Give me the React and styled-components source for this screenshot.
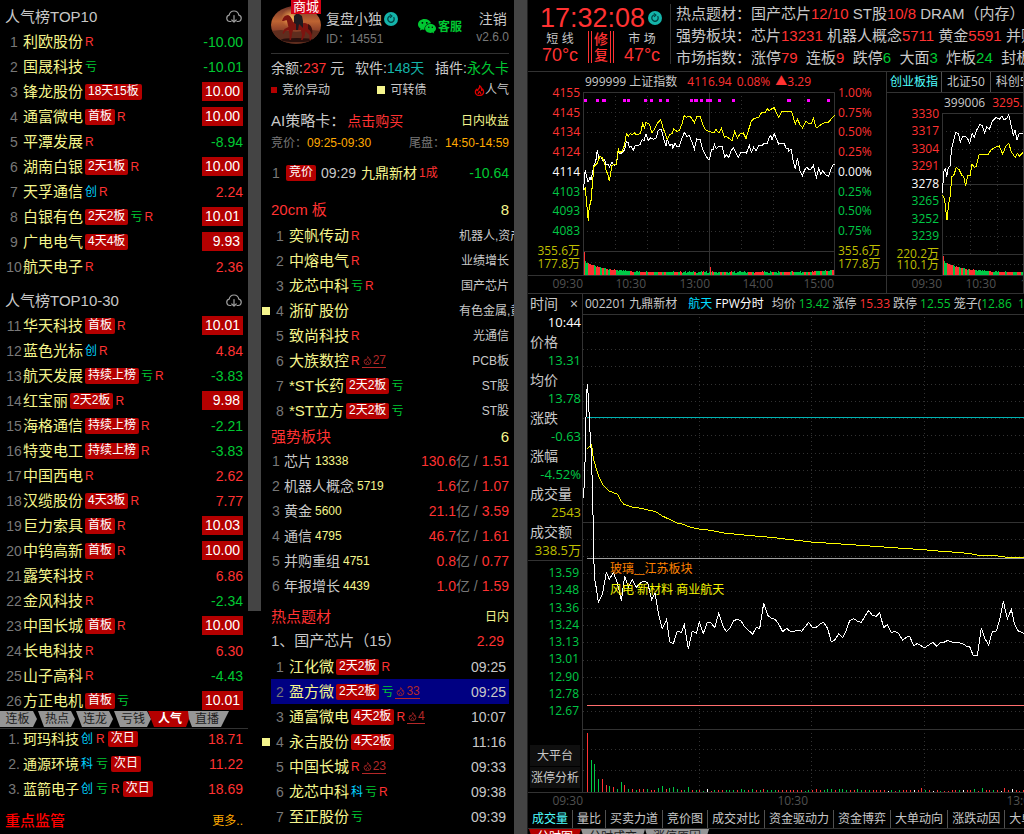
import React from "react";
import styled, { createGlobalStyle } from "styled-components";

const c = {
  red: "#ff3232",
  green: "#00c832",
  name: "#f5f58c",
  text: "#c8c8c8",
  dim: "#787878",
  badge: "#b40000",
  cyan: "#00d2ff",
  orange: "#ffaa00",
  line: "#323232",
  gutter: "#444444",
};
const web = '"Liberation Sans", "Noto Sans CJK SC", sans-serif';
const term = '"Open Sans", "Noto Sans CJK SC", sans-serif';

const Global = createGlobalStyle`
  * { box-sizing: border-box; }
  body { margin: 0; background: #000; overflow: hidden; }
  ul { list-style: none; margin: 0; padding: 0; }
  button { border: 0; background: none; padding: 0; margin: 0; font: inherit; color: inherit; cursor: pointer; }
  h2 { margin: 0; font-weight: 400; }
  svg { display: block; }
`;

const Page = styled.main`
  display: grid;
  grid-template-columns: 248px 13px 253px 14px minmax(0, 1fr);
  grid-template-rows: minmax(0, 1fr);
  height: 100vh;
  background: #000;
  color: ${c.text};
  font: 14px/20px ${web};
  white-space: nowrap;
`;
const Gutter = styled.div`
  background: ${c.gutter};
  height: ${(p) => p.$h || "100%"};
  border-right: ${(p) => (p.$edge ? "1px solid #202020" : "0")};
`;
const Left = styled.section`
  display: flex;
  flex-direction: column;
  min-height: 0;
  overflow: hidden;
`;
const Ranks = styled.div`
  flex: 1;
  min-height: 0;
  overflow: hidden;
  padding-top: 4px;
`;
const RankTitle = styled.h2`
  display: flex;
  justify-content: space-between;
  align-items: center;
  height: 25px;
  padding: 0 6px 0 5px;
  margin-top: ${(p) => p.$gap || 0}px;
  font-size: 15px;
`;
const Row = styled.li`
  position: relative;
  display: flex;
  align-items: center;
  height: ${(p) => p.$h || 25}px;
  padding: 0 5px;
`;
const Num = styled.span`
  width: 18px;
  text-align: center;
  color: ${c.dim};
`;
const Name = styled.span`
  color: ${c.name};
  font-size: ${(p) => p.$size || 15}px;
`;
const Tags = styled.span`
  display: flex;
  align-items: center;
  gap: ${(p) => p.$gap || 2}px;
  margin-left: 2px;
  margin-right: auto;
  font-size: 12px;
  line-height: 16px;
`;
const Badge = styled.span`
  padding: 0 3px;
  height: 16px;
  border-radius: 2px;
  background: ${c.badge};
  color: #fff;
  font-size: 12px;
  line-height: 15px;
`;
const Mark = styled.span`
  color: ${(p) => p.$c};
`;
const Heat = styled.a`
  display: inline-flex;
  align-items: center;
  gap: 1px;
  color: #b42828;
  border-bottom: 1px solid #b42828;
  height: 14px;
  padding-left: 1px;
  text-decoration: none;
`;
const Value = styled.span`
  color: ${(p) => p.$c};
`;
const Limit = styled.span`
  width: 41px;
  padding-right: 3px;
  text-align: right;
  line-height: 19px;
  background: ${c.badge};
  color: #fff;
`;
const SkewTabs = styled.nav`
  display: flex;
  height: 17px;
  flex: none;
`;
const SkewTab = styled.button`
  width: 41px;
  height: 16px;
  margin-right: -3px;
  font-size: 12px;
  line-height: 15px;
  padding-right: 3px;
  background: #969696;
  color: #1e1e1e;
  clip-path: polygon(0 0, 33px 0, 37px 50%, 33px 100%, 6px 100%);
  ${(p) => p.$first && "clip-path: polygon(0 0, 33px 0, 37px 50%, 33px 100%, 0 100%); padding-right: 6px;"}
  ${(p) => p.$last && "clip-path: polygon(0 0, 100% 0, 33px 100%, 4px 100%, 1px 50%);"}
  ${(p) => p.$on && `width: 44px; margin: 0 -4px; padding-right: 0; font-weight: 700; background: ${c.badge}; color: #fff; position: relative; clip-path: polygon(0 0, 100% 0, 38px 100%, 6px 100%);`}
`;
const Watch = styled.div`
  flex: none;
  height: 106px;
  border-top: 1px solid ${c.line};
`;
const WatchList = styled.ul`
  display: grid;
  gap: 5px;
`;
const Footer = styled.div`
  display: flex;
  justify-content: space-between;
  align-items: center;
  height: 22px;
  margin-top: 11px;
  padding: 0 5px;
`;
const Alert = styled.span`
  color: #f00;
  font-size: 15px;
  font-weight: 500;
`;
const More = styled.a`
  color: ${c.orange};
  font-size: 12px;
  text-decoration: none;
`;

const Middle = styled.section`
  overflow: hidden;
  padding: 0 5px 0 10px;
`;
const Profile = styled.header`
  display: flex;
  height: 54px;
  border-bottom: 1px solid ${c.line};
`;
const Portrait = styled.div`
  position: relative;
  width: 50px;
  height: 38px;
  margin-top: 6px;
`;
const Mall = styled.a`
  position: absolute;
  top: -6px;
  left: 20px;
  height: 14px;
  padding: 0 2px;
  background: #d20014;
  color: #fff;
  font-size: 13px;
  line-height: 13px;
  text-decoration: none;
`;
const Who = styled.div`
  margin: 9px 20px 0 5px;
`;
const WhoName = styled.div`
  display: flex;
  gap: 2px;
  align-items: center;
  line-height: 20px;
`;
const Small = styled.div`
  color: ${c.dim};
  font-size: 12px;
  line-height: 20px;
`;
const Service = styled.a`
  display: flex;
  align-items: center;
  gap: 2px;
  height: 53px;
  color: ${c.green};
  font-size: 12px;
  font-weight: 700;
  text-decoration: none;
`;
const Session = styled.div`
  margin: 9px 0 0 auto;
  text-align: center;
  line-height: 20px;
  ${Small} { line-height: 16px; }
`;
const Line = styled.div`
  display: flex;
  align-items: center;
  justify-content: space-between;
  height: ${(p) => p.$h}px;
  margin-top: ${(p) => p.$gap || 0}px;
  font-size: ${(p) => p.$size || 14}px;
`;
const Legend = styled.span`
  display: flex;
  align-items: center;
  gap: ${(p) => p.$gap ?? 5}px;
`;
const Square = styled.i`
  width: ${(p) => p.$s}px;
  height: ${(p) => p.$s}px;
  background: ${(p) => p.$c};
`;
const Buy = styled.a`
  margin: 0 auto 0 2px;
  color: ${c.red};
  font-size: 14px;
  text-decoration: none;
`;
const Signal = styled.div`
  display: flex;
  align-items: center;
  gap: 5px;
  height: 22px;
  margin-top: 8px;
  > :last-child { margin-left: auto; }
  > :first-child { width: 10px; text-align: center; }
`;
const Share = styled.span`
  margin-left: -3px;
  color: ${c.red};
  font-size: 12px;
`;
const Heading = styled.h2`
  display: flex;
  justify-content: space-between;
  align-items: center;
  height: ${(p) => p.$h || 22}px;
  margin-top: ${(p) => p.$gap}px;
  color: ${c.red};
  font-size: 15px;
`;
const Count = styled.span`
  color: ${c.name};
  font-size: ${(p) => p.$size || 15}px;
`;
const Pick = styled(Row)`
  padding: 0 ${(p) => (p.$time ? 3 : 0)}px 0 0;
  background: ${(p) => (p.$on ? "#000082" : "none")};
`;
const Flag = styled.i`
  position: absolute;
  left: -9px;
  width: 8px;
  height: 8px;
  background: ${c.name};
`;
const Theme = styled.span`
  width: 50px;
  text-align: right;
  font-size: 12px;
`;
const Average = styled.span`
  padding-right: 5px;
  color: ${c.red};
  font-size: 14px;
`;
const Sector = styled(Row)`
  padding: 0;
  > :first-child { width: 10px; margin-right: 3px; }
`;
const Heatness = styled.span`
  margin: 0 auto 0 3px;
  color: ${c.name};
  font-size: 12px;
`;
const Flow = styled.span`
  color: ${c.red};
  ${Mark} { margin-right: 4px; }
`;

const Right = styled.section`
  display: flex;
  flex-direction: column;
  min-height: 0;
  overflow: hidden;
`;
const Mood = styled.header`
  display: flex;
  flex: none;
  height: 72px;
  border-bottom: 1px solid ${c.line};
`;
const ClockBox = styled.div`
  flex: none;
  width: 143px;
  margin: 4px 0 7px;
  padding-left: 12px;
  border-right: 1px solid ${c.line};
`;
const Clock = styled.div`
  display: flex;
  align-items: center;
  gap: 3px;
  height: 27px;
  color: ${c.red};
  font-size: 27px;
`;
const Gauges = styled.div`
  display: flex;
  align-items: center;
  gap: 8px;
`;
const Gauge = styled.div`
  width: 40px;
  text-align: center;
  font-size: 12px;
  line-height: 16px;
`;
const Degree = styled.div`
  color: ${c.red};
  font-size: 18px;
  line-height: 16px;
`;
const Phase = styled.div`
  width: 26px;
  border: solid ${c.red};
  border-style: none double;
  border-width: 0 4px;
  color: ${c.red};
  font-size: 14px;
  font-weight: 500;
  line-height: 16px;
  text-align: center;
  white-space: normal;
`;
const Ticker = styled.div`
  padding: 3px 0 0 5px;
  font-size: 15px;
  line-height: 22px;
  overflow: hidden;
`;
const TickLine = styled.div`
  white-space: pre;
`;

const Indices = styled.div`
  display: flex;
  flex: none;
  height: 222px;
  font: 12px/18px ${term};
  border-bottom: 1px solid ${c.line};
`;
const Index = styled.div`
  flex: ${(p) => (p.$grow ? "1 0 0" : "0 0 359px")};
  min-width: 0;
  overflow: hidden;
  display: flex;
  flex-direction: column;
  border-right: 1px solid ${c.line};
`;
const Body = styled.div`
  display: flex;
  flex: 1;
  min-height: 0;
  border-bottom: 1px solid ${c.line};
`;
const Scale = styled.div`
  flex: none;
  width: ${(p) => (p.$right ? 51 : 55)}px;
  padding: ${(p) => p.$top}px 3px 0 ${(p) => (p.$right ? 3 : 0)}px;
  text-align: ${(p) => (p.$right ? "left" : "right")};
`;
const Steps = styled.div`
  display: flex;
  flex-direction: column;
  justify-content: space-between;
  height: ${(p) => p.$h}px;
  line-height: 16px;
`;
const Vol = styled.div`
  margin-top: ${(p) => p.$gap}px;
  color: #bebe00;
  line-height: ${(p) => p.$lh}px;
`;
const Plot = styled.div`
  flex: none;
  width: 252px;
`;
const PlotTitle = styled.div`
  display: flex;
  gap: ${(p) => p.$gap || 5}px;
  height: 20px;
  padding-left: 2px;
  line-height: 19px;
`;
const IndexName = styled.span`
  margin-right: 5px;
`;
const Axis = styled.div`
  display: grid;
  flex: none;
  grid-template-columns: ${(p) => p.$cols};
  height: 17px;
  line-height: 16px;
  font-family: ${term};
  font-size: 12px;
  color: #505050;
  text-align: right;
`;
const BoxTabs = styled.nav`
  display: flex;
  flex: none;
  height: ${(p) => p.$h || 19}px;
  border-bottom: 1px solid ${c.line};
  font: 12px/18px ${term};
`;
const BoxTab = styled.button`
  flex: none;
  padding: 0 ${(p) => p.$pad || 4}px;
  border-right: 1px solid #505050;
  color: ${(p) => (p.$on ? "#50ffff" : c.text)};
`;
const Stock = styled.div`
  display: flex;
  flex: 1;
  min-height: 400px;
  border-bottom: 1px solid ${c.line};
  font: 12px/18px ${term};
`;
const Side = styled.aside`
  display: flex;
  flex-direction: column;
  flex: none;
  width: 55px;
  border-right: 1px solid ${c.line};
`;
const Info = styled.dl`
  margin: 0;
  padding-left: 2px;
  border-bottom: 1px solid ${c.line};
  font-size: 13px;
  line-height: 19px;
`;
const Term = styled.dt`
  display: flex;
  justify-content: space-between;
  font-size: 14px;
`;
const Close = styled.button`
  width: 16px;
  font-size: 14px;
`;
const Data = styled.dd`
  margin: 0;
  padding-right: 1px;
  text-align: right;
  color: ${(p) => p.$c};
`;
const Prices = styled(Steps)`
  margin-top: 4px;
  padding-right: 3px;
  text-align: right;
  color: #00c846;
`;
const Tools = styled.div`
  display: grid;
  gap: 1px;
  margin-top: auto;
  padding: 0 2px 4px;
`;
const Tool = styled.button`
  height: 21px;
  background: #0f0f0f;
`;
const Main = styled.div`
  display: flex;
  flex-direction: column;
  flex: 1;
  min-width: 0;
`;
const Quote = styled.div`
  display: flex;
  gap: 3px;
  flex: none;
  height: 20px;
  padding-left: 2px;
  line-height: 19px;
  overflow: hidden;
`;
const QuoteName = styled.span`
  margin-right: ${(p) => p.$r || 5}px;
`;
const Canvas = styled.div`
  position: relative;
  flex: 1;
  min-height: 0;
`;
const Notes = styled.div`
  position: absolute;
  top: 51%;
  left: 27px;
  color: ${(p) => p.$c};
  line-height: 21px;
`;
const Sheets = styled.nav`
  display: flex;
  flex: none;
  height: 5px;
  padding-left: 1px;
  overflow: hidden;
`;
const Sheet = styled.button`
  flex: none;
  height: 16px;
  padding: 0 8px;
  font: 12px/16px ${term};
  background: ${(p) => (p.$on ? c.badge : "#969696")};
  color: ${(p) => (p.$on ? "#fff" : "#1e1e1e")};
  clip-path: polygon(0 0, 100% 0, calc(100% - 5px) 100%, 5px 100%);
`;

const Cloud = () => (
  <svg width="16" height="14" viewBox="0 0 16 14" fill="none" stroke="#a0a0a0" strokeWidth="1.2" strokeLinecap="round" strokeLinejoin="round">
    <path d="M5 11.5H4A3.2 3.2 0 0 1 3.2 5.2C3.6 2.600 5.600 1 8 1s4.400 1.600 4.800 4.200A3.200 3.200 0 0 1 12 11.500h-1" />
    <path d="M8 5.500V12M5.800 10 8 12.200 10.200 10" />
  </svg>
);
const Flame = ({ s = 9, color = "currentColor", w = 1.1 }) => (
  <svg width={s} height={s} viewBox="0 0 12 12" fill="none" stroke={color} strokeWidth={w} strokeLinejoin="round">
    <path d="M6.200.8c.3 2-.7 2.700-1.500 3.700C4.200 5 4 5.500 4 6.200 3.300 5.900 3 5.200 3 4.500 2 5.500 1.500 6.500 1.500 7.500a4.500 3.900 0 0 0 9 0c0-1.300-.6-2.300-1.300-3.200-.1.900-.4 1.300-.9 1.600C8.500 3.800 7.800 1.800 6.200.8Z" />
    <path d="M4.700 9.800c-.4-1.100.5-1.800 1.300-2.600.8.800 1.700 1.500 1.300 2.600" />
  </svg>
);
const Refresh = () => (
  <svg width="14" height="14" viewBox="0 0 14 14">
    <circle cx="7" cy="7" r="7" fill="#14b4aa" />
    <path d="M9.600 5.200A3.200 3.200 0 1 1 6 4M5.800 2.500 7.800 4 6 5.700" fill="none" stroke="#004646" strokeWidth="1.300" />
  </svg>
);
const WeChat = () => (
  <svg width="18" height="15" viewBox="0 0 18 15" fill={c.green}>
    <path d="M6.600 0C3 0 0 2.400 0 5.400c0 1.700 1 3.200 2.500 4.200L1.900 11.500l2.300-1.100c.7.2 1.500.3 2.300.3C6.100 7.300 8.800 4.300 13 4.200 12.300 1.800 9.700 0 6.600 0Z" />
    <path d="M12.500 5C9.500 5 7.100 7 7.100 9.500s2.400 4.400 5.400 4.400c.6 0 1.200-.1 1.800-.3l1.900 1-.5-1.600c1.400-.8 2.300-2.100 2.300-3.500C18 7 15.500 5 12.500 5Z" />
    <g fill="#000"><circle cx="4.400" cy="3.800" r=".9" /><circle cx="8.800" cy="3.800" r=".9" /><circle cx="10.800" cy="8.200" r=".7" /><circle cx="14.300" cy="8.200" r=".7" /></g>
  </svg>
);
const Rider = () => (
  <svg width="50" height="38" viewBox="0 0 50 38">
    <defs>
      <clipPath id="oval"><ellipse cx="25" cy="19" rx="25" ry="19" /></clipPath>
      <linearGradient id="sky" x1="0" y1="0" x2="0" y2="1">
        <stop offset="0" stopColor="#6e3228" /><stop offset=".4" stopColor="#be6432" /><stop offset=".6" stopColor="#96462a" /><stop offset="1" stopColor="#321914" />
      </linearGradient>
      <radialGradient id="sun"><stop offset="0" stopColor="#ffc864" /><stop offset="1" stopColor="#e68c46" stopOpacity="0" /></radialGradient>
    </defs>
    <g clipPath="url(#oval)">
      <rect width="50" height="38" fill="url(#sky)" />
      <circle cx="20" cy="12" r="10" fill="url(#sun)" />
      <path d="M0 25 10 24 25 26 40 24 50 25V38H0Z" fill="#5f2d1e" />
      <ellipse cx="26" cy="34" rx="16" ry="2" fill="#280f0c" />
      <path d="M11 15C12 11 14 9 17 9c3 1 4 4 5 7 4 2 8 1 12 1 4 1 5 4 5 8l2 3-1 6h-1.500l0-5-4-4-1 5-2 4-1.500 0 1-5-1-5H22l-1 4-1 6h-1.500l0-6-1-4-3 1-2 3-1-1 2-4 4-2c-1-3-1-5-2-7l-3 1Z" fill="#7d140f" />
      <path d="M37 18c4 2 5 6 4 11-1-3-2-5-4-6Z" fill="#3c0f0c" />
      <path d="M23 17 23 10l2-2 0-3 3 0 0 3 3 2 1 5 0 7-4-4-1 6-2 0 0-6Z" fill="#1e191e" />
    </g>
  </svg>
);

const markColor = { R: c.red, 亏: c.green, 创: c.cyan, 科: c.cyan };
const TagList = ({ tags = "", gap }) => (
  <Tags $gap={gap}>
    {tags.split(" ").filter(Boolean).map((t) =>
      markColor[t] ? <Mark key={t} $c={markColor[t]}>{t}</Mark>
        : t[0] === "^" ? <Heat key={t} href="#heat"><Flame />{t.slice(1)}</Heat>
          : <Badge key={t}>{t}</Badge>
    )}
  </Tags>
);
const Change = ({ v }) => (+v > 9.9 ? <Limit>{v}</Limit> : <Value $c={+v < 0 ? c.green : c.red}>{v}</Value>);

const top = [
  ["利欧股份", "R", "-10.00"], ["国晟科技", "亏", "-10.01"], ["锋龙股份", "18天15板", "10.00"], ["通富微电", "首板 R", "10.00"],
  ["平潭发展", "R", "-8.94"], ["湖南白银", "2天1板 R", "10.00"], ["天孚通信", "创 R", "2.24"], ["白银有色", "2天2板 亏 R", "10.01"],
  ["广电电气", "4天4板", "9.93"], ["航天电子", "R", "2.36"], ["华天科技", "首板 R", "10.01"], ["蓝色光标", "创 R", "4.84"],
  ["航天发展", "持续上榜 亏 R", "-3.83"], ["红宝丽", "2天2板 R", "9.98"], ["海格通信", "持续上榜 R", "-2.21"], ["特变电工", "持续上榜 R", "-3.83"],
  ["中国西电", "R", "2.62"], ["汉缆股份", "4天3板 R", "7.77"], ["巨力索具", "首板 R", "10.03"], ["中钨高新", "首板 R", "10.00"],
  ["露笑科技", "R", "6.86"], ["金风科技", "R", "-2.34"], ["中国长城", "首板 R", "10.00"], ["长电科技", "R", "6.30"],
  ["山子高科", "R", "-4.43"], ["方正电机", "首板 亏", "10.01"],
];
const watch = [["珂玛科技", "创 R 次日", "18.71"], ["通源环境", "科 亏 次日", "11.22"], ["蓝箭电子", "创 亏 R 次日", "18.69"]];
const board = [
  ["奕帆传动", "R", "机器人,资产重组"], ["中熔电气", "R", "业绩增长"], ["龙芯中科", "亏 R", "国产芯片"], ["浙矿股份", "", "有色金属,黄金", true],
  ["致尚科技", "R", "光通信"], ["大族数控", "R ^27", "PCB板"], ["*ST长药", "2天2板 亏", "ST股"], ["*ST立方", "2天2板 亏", "ST股"],
];
const sectors = [
  ["芯片", "13338", "130.6", "1.51"], ["机器人概念", "5719", "1.6", "1.07"], ["黄金", "5600", "21.1", "3.59"],
  ["通信", "4795", "46.7", "1.61"], ["并购重组", "4751", "0.8", "0.77"], ["年报增长", "4439", "1.0", "1.59"],
];
const hot = [
  ["江化微", "2天2板 R", "09:25"], ["盈方微", "2天2板 亏 ^33", "09:25"], ["通富微电", "4天2板 R ^4", "10:07"], ["永吉股份", "4天2板", "11:16", true],
  ["中国长城", "R ^23", "09:33"], ["龙芯中科", "科 亏 R", "09:38"], ["至正股份", "亏", "09:39"],
];
const info = [
  ["价格", "13.31", "#00c846"], ["均价", "13.78", "#00c846"], ["涨跌", "-0.63", "#00c846"], ["涨幅", "-4.52%", "#00c846"],
  ["成交量", "2543", "#bebe00"], ["成交额", "338.5万", "#bebe00"],
];

const RankRows = ({ from, to }) => (
  <ul>
    {top.slice(from, to).map(([n, t, v], i) => (
      <Row key={n}><Num>{from + i + 1}</Num><Name>{n}</Name><TagList tags={t} /><Change v={v} /></Row>
    ))}
  </ul>
);
const R = ({ children }) => <Mark $c={c.red}>{children}</Mark>;
const G = ({ children }) => <Mark $c={c.green}>{children}</Mark>;

const stroke = { fill: "none", vectorEffect: "non-scaling-stroke", strokeWidth: 1 };
const HLine = ({ y, x = 0, w, color = "#323232", dash }) => (
  <line x1={x} x2={w} y1={y} y2={y} stroke={color} strokeDasharray={dash ? "1 3" : undefined} {...stroke} />
);
const VLine = ({ x, h, dash, y = 0 }) => (
  <line x1={x} x2={x} y1={y} y2={h} stroke="#323232" strokeDasharray={dash ? "1 3" : undefined} {...stroke} />
);
const noise = (i) => {
  const s = Math.sin(i * 12.9898) * 43758.5453;
  return s - Math.floor(s);
};
const VolumeBars = ({ base, first }) =>
  Array.from({ length: 250 }, (_, i) => {
    const h = i === 0 ? first : i === 126 ? 24 : 7 + 33 * Math.exp(-i / 18) + noise(i) * 4 + (i > 225 ? (i - 225) / 4 : 0);
    const up = i === 0 || i === 126 || noise(Math.floor(i / 2) + 7) > 0.5;
    return <rect key={i} x={3 + i * 3} y={base - h} width="3" height={h} fill={up ? "#ff3232" : "#00c846"} />;
  });

const shWhite = "5,307 7,270 10,245 13,262 18,282 24,268 27,275 31,258 36,232 41,222 46,187 50,208 56,206 62,216 68,214 72,230 78,228 83,237 90,222 96,232 103,229 109,190 115,198 128,186 133,160 139,165 142,178 147,175 154,186 160,172 167,173 174,170 180,155 186,158 192,138 199,157 206,150 214,154 222,150 229,127 238,124 244,148 252,175 256,150 262,173 270,168 272,183 279,165 285,176 292,176 298,155 307,134 315,145 322,143 329,160 337,184 344,152 350,156 355,155 361,182 370,200 378,214 383,213 388,186 394,184 397,168 403,182 410,176 420,175 428,206 434,200 440,208 447,190 454,178 462,195 469,207 476,193 485,192 493,196 502,172 508,193 515,178 522,188 530,172 540,172 547,165 555,168 560,153 566,142 570,155 577,137 582,150 590,168 606,165 612,180 618,180 620,190 627,183 634,220 640,244 646,210 654,250 661,263 668,246 674,238 680,244 687,244 694,232 703,268 710,242 716,258 722,248 732,262 740,265 747,244 752,231 758,230";
const shYellow = "7,305 10,300 14,345 19,400 22,350 26,350 31,290 36,235 46,225 53,206 60,208 68,225 72,245 78,262 82,280 90,232 103,229 109,183 113,193 121,190 128,170 133,137 139,145 144,137 150,140 157,135 163,140 175,137 182,107 187,120 192,103 202,108 210,135 218,122 228,103 236,95 244,122 250,138 256,155 263,140 270,137 275,123 285,130 292,128 300,107 306,83 313,88 324,84 330,92 337,104 345,85 355,86 362,110 372,127 383,131 395,135 402,125 411,135 418,120 427,148 433,145 440,150 450,158 458,130 466,150 475,136 484,135 492,152 500,125 508,100 516,92 530,88 540,72 548,75 556,63 562,68 570,62 577,59 582,73 590,88 600,70 612,72 620,70 629,72 640,108 646,93 655,112 662,120 672,100 680,107 688,107 694,90 703,120 714,112 725,105 740,102 750,90 758,83";
const signals = [10, 46, 65, 67, 127, 139, 190, 208, 235, 256, 328, 340, 344, 358, 376, 380, 385, 412, 454, 619, 623, 679, 739];
const cyWhite = "488,340 490,280 496,263 500,290 505,262 510,258 515,205 521,180 527,158 535,160 541,186 548,168 556,168 564,178 569,190 577,160 583,172 590,150 600,133 606,136 614,158 620,140 628,148 638,122 648,112 658,118 666,108 672,120 680,115 686,103 692,130 700,165 705,150 711,180 718,160 732,160 760,170 800,150 860,190 920,180 980,210 1060,190 1160,200 1240,180";
const cyYellow = "488,345 494,360 501,420 506,370 511,345 515,290 521,287 529,262 538,270 545,285 551,290 557,318 563,285 571,285 576,252 583,262 588,260 597,225 610,222 625,222 633,210 645,202 658,198 668,222 678,198 686,190 694,215 706,233 712,220 718,228 732,215 800,220 880,240 960,210 1060,220 1240,205";

const Shanghai = () => (
  <svg width="252" height="183" viewBox="0 0 756 549" shapeRendering="crispEdges">
    {[1.5, 240, 477].map((y) => <HLine key={y} y={y + 0.5} w={756} />)}
    {[61, 121, 181, 298, 358, 418, 511].map((y) => <HLine key={y} y={y + 0.5} w={756} dash />)}
    {[1.5, 379.5, 754.5].map((x) => <VLine key={x} x={x} h={549} />)}
    {[97.5, 193.5, 286.5, 475.5, 571.5, 664.5].map((x) => <VLine key={x} x={x} h={477} dash />)}
    <VolumeBars base={549} first={69} />
    <g transform="translate(-3 -12)">
      {signals.map((x) => <rect key={x} x={x - 4} y="33" width="9" height="9" fill="#ff00ff" />)}
      <polyline points={shWhite} stroke="#fff" {...stroke} />
      <polyline points={shYellow} stroke="#ff0" {...stroke} />
    </g>
  </svg>
);
const ChiNext = () => (
  <svg width="252" height="162" viewBox="0 0 756 486" shapeRendering="crispEdges">
    {[1.5, 214.5, 424.5].map((y) => <HLine key={y} y={y} w={756} />)}
    {[55.5, 109.5, 160.5, 265.5, 319.5, 370.5, 454.5].map((y) => <HLine key={y} y={y} w={756} dash />)}
    <VLine x={1.5} h={486} />
    {[85.5, 166.5, 250.5].map((x) => <VLine key={x} x={x} h={425} dash />)}
    <VolumeBars base={486} first={58} />
    <g transform="translate(-486 -99)">
      <polyline points={cyWhite} stroke="#fff" {...stroke} />
      <polyline points={cyYellow} stroke="#ff0" {...stroke} />
    </g>
  </svg>
);

const stockPrice = "179,-157 184,-290 187,-450 190,-498 193,-460 197,-370 202,-290 206,-160 209,0 211,80 217,115 223,158 235,133 247,68 256,88 268,68 280,98 292,152 302,78 313,112 325,88 337,112 350,98 360,93 371,98 383,150 393,130 404,195 415,236 428,208 437,276 448,281 460,243 472,248 481,224 493,296 505,243 517,250 526,217 538,250 550,217 560,217 572,233 584,190 596,226 607,245 617,236 629,212 640,208 652,214 663,232 686,252 697,232 707,236 719,160 731,196 742,204 753,208 764,222 776,245 788,235 797,243 810,244 820,240 833,244 854,217 866,233 877,232 890,220 899,217 911,236 922,276 932,270 944,252 956,262 967,240 977,212 989,206 1000,213 1012,217 1022,200 1034,181 1045,196 1057,199 1067,188 1079,233 1090,224 1102,248 1113,244 1124,250 1136,271 1147,262 1157,259 1169,287 1179,281 1190,286 1201,294 1213,286 1226,277 1238,289 1248,279 1260,277 1271,271 1283,276 1315,280 1328,289 1337,290 1348,317 1360,317 1372,233 1383,266 1394,286 1405,244 1417,243 1427,208 1438,154 1450,206 1462,178 1472,224 1483,243 1500,250";
const stockAvg = "190,-305 203,-315 208,-275 215,-250 225,-220 237,-195 255,-177 281,-167 290,-148 300,-137 325,-129 350,-125 395,-115 415,-102 460,-81 475,-78 500,-68 526,-63 560,-59 600,-51 660,-45 750,-37 861,-24 1010,-14 1208,0 1255,4 1312,8 1345,12 1370,17 1415,17 1450,22 1500,23";
const openBars = [
  [190, 178, 0], [202, 97, 1], [211, 85, 1], [223, 40, 1], [235, 40, 0], [247, 20, 0], [256, 19, 1], [268, 14, 0], [280, 10, 1], [292, 31, 1],
  [301, 22, 0], [313, 10, 1], [325, 10, 0], [337, 7, 1], [347, 10, 0], [358, 10, 0], [370, 10, 1], [382, 7, 0], [392, 7, 0], [403, 13, 1],
  [415, 19, 1], [427, 10, 0], [437, 13, 1], [448, 16, 1], [460, 10, 1], [472, 7, 0], [481, 7, 1], [493, 16, 1], [505, 7, 0], [517, 7, 1], [526, 7, 0],
];
const peaks = { 719: 9, 911: 10, 922: 10, 1192: 13, 1348: 10, 1372: 13, 1438: 13, 1462: 9 };
const laterBars = Array.from({ length: 86 }, (_, i) => {
  const x = Math.round(538 + i * 11.3);
  const peak = Object.keys(peaks).find((p) => Math.abs(p - x) < 6);
  return [x, peak ? peaks[peak] : 4 + Math.round(noise(i) * 4), noise(i + 40) > 0.92 ? 2 : noise(i + 3) > 0.5 ? 1 : 0];
});
const barColor = ["#ff3232", "#00c846", "#ffffff"];
const Intraday = () => (
  <svg width="100%" height="100%" viewBox="0 0 1323 1434" preserveAspectRatio="none" shapeRendering="crispEdges">
    {[1.5, 625.5, 1246.5].map((y) => <HLine key={y} y={y} w={1323} />)}
    {[55.5, 106.5, 157.5, 211.5, 262.5, 313.5, 364.5, 418.5, 469.5, 520.5, 571.5, 676.5, 727.5, 778.5, 832.5, 883.5, 934.5, 985.5, 1039.5, 1090.5, 1141.5, 1192.5, 1306.5, 1369.5].map((y) => (
      <HLine key={y} y={y} w={1323} dash />
    ))}
    {[349.5, 685.5, 1024.5].map((x) => <VLine key={x} x={x} y={9} h={1434} dash />)}
    <HLine x={12} y={310.5} w={1323} color="#00b4b4" />
    <HLine x={12} y={733.5} w={1323} color="#a0a0a0" />
    <HLine x={12} y={1174.5} w={1323} color="#ff6e6e" />
    <g transform="translate(-177 708)">
      {[...openBars, ...laterBars].map(([x, h, k]) => <rect key={x} x={x - 1} y={726 - h} width="3" height={h} fill={barColor[k]} />)}
      <polyline points={stockAvg} stroke="#ff0" {...stroke} />
      <polyline points={stockPrice} stroke="#fff" {...stroke} />
    </g>
  </svg>
);

const tone = (i, mid) => (i < mid ? "#ff3232" : i === mid ? "#ffffff" : "#00c846");
const Ladder = ({ values, mid, h }) => (
  <Steps $h={h}>{values.map((v, i) => <Mark key={i} $c={tone(i, mid)}>{v}</Mark>)}</Steps>
);

export default function App() {
  return (
    <Page lang="zh-CN">
      <Global />
      <Left>
        <Ranks>
          <RankTitle>人气榜TOP10<Cloud /></RankTitle>
          <RankRows from={0} to={10} />
          <RankTitle $gap={9}>人气榜TOP10-30<Cloud /></RankTitle>
          <RankRows from={10} to={26} />
        </Ranks>
        <SkewTabs>
          <SkewTab $first>连板</SkewTab>
          <SkewTab>热点</SkewTab>
          <SkewTab>连龙</SkewTab>
          <SkewTab>亏钱</SkewTab>
          <SkewTab $on>人气</SkewTab>
          <SkewTab $last>直播</SkewTab>
        </SkewTabs>
        <Watch>
          <WatchList>
            {watch.map(([n, t, v], i) => (
              <Row key={n} $h={20}><Num>{i + 1}.</Num><Name $size={14}>{n}</Name><TagList tags={t} gap={3} /><Value $c={c.red}>{v}</Value></Row>
            ))}
          </WatchList>
          <Footer><Alert>重点监管</Alert><More href="#more">更多..</More></Footer>
        </Watch>
      </Left>
      <Gutter $h="611px" />

      <Middle>
        <Profile>
          <Portrait><Rider /><Mall href="#mall">商城</Mall></Portrait>
          <Who>
            <WhoName>复盘小独<Refresh /></WhoName>
            <Small>ID：14551</Small>
          </Who>
          <Service href="#service"><WeChat />客服</Service>
          <Session><button>注销</button><Small>v2.6.0</Small></Session>
        </Profile>
        <Line $h={28}>
          <span>余额:<R>237</R> 元</span>
          <span>软件:<Mark $c="#14b4aa">148天</Mark></span>
          <span>插件:<G>永久卡</G></span>
        </Line>
        <Line $h={16} $size={12}>
          <Legend><Square $s={6} $c={c.badge} />竞价异动</Legend>
          <Legend><Square $s={8} $c={c.name} />可转债</Legend>
          <Legend $gap={0}><Flame s={11} color="#dc0000" w={1.500} />人气</Legend>
        </Line>
        <Line $h={22} $gap={12} $size={15}>
          <span>AI策略卡：</span><Buy href="#buy">点击购买</Buy><Count $size={12}>日内收益</Count>
        </Line>
        <Line $h={22} $size={12}>
          <Mark $c={c.dim}>竞价：<Mark $c={c.orange}>09:25-09:30</Mark></Mark>
          <Mark $c={c.dim}>尾盘：<Mark $c={c.orange}>14:50-14:59</Mark></Mark>
        </Line>
        <Signal>
          <Num>1</Num><Badge>竞价</Badge><span>09:29</span>
          <Name $size={14}>九鼎新材</Name>
          <Share>1成</Share>
          <Value $c={c.green}>-10.64</Value>
        </Signal>
        <Heading $gap={13} $h={26}>20cm 板<Count>8</Count></Heading>
        <ul>
          {board.map(([n, t, th, flag], i) => (
            <Pick key={n}>{flag && <Flag />}<Num>{i + 1}</Num><Name>{n}</Name><TagList tags={t} /><Theme>{th}</Theme></Pick>
          ))}
        </ul>
        <Heading $gap={3}>强势板块<Count>6</Count></Heading>
        <ul>
          {sectors.map(([n, k, a, b], i) => (
            <Sector key={n}><Num>{i + 1}</Num><span>{n}</span><Heatness>{k}</Heatness><Flow>{a}<Mark $c={c.dim}>亿 /</Mark>{b}</Flow></Sector>
          ))}
        </ul>
        <Heading $gap={8}>热点题材<Count $size={12}>日内</Count></Heading>
        <Line $h={26} $size={15}><span>1、国产芯片（15）</span><Average>2.29</Average></Line>
        <ul>
          {hot.map(([n, t, time, flag], i) => (
            <Pick key={n} $time $on={i === 1}>{flag && <Flag />}<Num>{i + 1}</Num><Name>{n}</Name><TagList tags={t} /><span>{time}</span></Pick>
          ))}
        </ul>
      </Middle>
      <Gutter $edge />

      <Right>
        <Mood>
          <ClockBox>
            <Clock>17:32:08<Refresh /></Clock>
            <Gauges>
              <Gauge>短 线<Degree>70°c</Degree></Gauge>
              <Phase>修复</Phase>
              <Gauge>市 场<Degree>47°c</Degree></Gauge>
            </Gauges>
          </ClockBox>
          <Ticker>
            <TickLine>热点题材：国产芯片<R>12/10</R> ST股<R>10/8</R> DRAM（内存）<R>9/6</R></TickLine>
            <TickLine>强势板块：芯片<R>13231</R> 机器人概念<R>5711</R> 黄金<R>5591</R> 并购重组<R>4751</R></TickLine>
            <TickLine>市场指数：涨停<R>79</R>  连板<R>9</R>  跌停<G>6</G>  大面<G>3</G>  炸板<G>24</G>  封板率</TickLine>
          </Ticker>
        </Mood>

        <Indices>
          <Index>
            <Body>
              <Scale $top={13}>
                <Ladder h={154} mid={4} values={["4155", "4145", "4134", "4124", "4114", "4103", "4093", "4083"]} />
                <Vol $gap={5} $lh={13}>355.6万<br />177.8万</Vol>
              </Scale>
              <Plot>
                <PlotTitle><IndexName>999999 上证指数</IndexName><R>4116.94</R><R>0.08%</R><R>▲3.29</R></PlotTitle>
                <Shanghai />
              </Plot>
              <Scale $right $top={13}>
                <Ladder h={154} mid={4} values={["1.00%", "0.75%", "0.50%", "0.25%", "0.00%", "0.25%", "0.50%", "0.75%"]} />
                <Vol $gap={5} $lh={13}>355.6万<br />177.8万</Vol>
              </Scale>
            </Body>
            <Axis $cols="55px 63px 64px 63px 61px"><span>09:30</span><span>10:30</span><span>13:00</span><span>14:00</span><span>15:00</span></Axis>
          </Index>
          <Index $grow>
            <BoxTabs $h={21}><BoxTab $on $pad={3}>创业板指</BoxTab><BoxTab $pad={5}>北证50</BoxTab><BoxTab $pad={5}>科创50</BoxTab></BoxTabs>
            <Body>
              <Scale $top={13}>
                <Ladder h={138} mid={4} values={["3330", "3317", "3304", "3291", "3278", "3265", "3252", "3239"]} />
                <Vol $gap={4} $lh={11}>220.2万<br />110.1万</Vol>
              </Scale>
              <Plot>
                <PlotTitle $gap={7}><span>399006</span><R>3295.38</R></PlotTitle>
                <ChiNext />
              </Plot>
            </Body>
            <Axis $cols="55px 54px 55px 55px 55px"><span>09:30</span><span>10:30</span><span>13:00</span><span>14:00</span><span>15:00</span></Axis>
          </Index>
        </Indices>

        <Stock>
          <Side>
            <Info>
              <Term>时间<Close aria-label="关闭">×</Close></Term>
              <Data $c="#fff">10:44</Data>
              {info.map(([k, v, col]) => (
                <React.Fragment key={k}><Term>{k}</Term><Data $c={col}>{v}</Data></React.Fragment>
              ))}
            </Info>
            <Prices $h={154}>
              {["13.59", "13.48", "13.36", "13.24", "13.13", "13.01", "12.90", "12.78", "12.67"].map((p) => <span key={p}>{p}</span>)}
            </Prices>
            <Tools><Tool>大平台</Tool><Tool>涨停分析</Tool></Tools>
          </Side>
          <Main>
            <Quote>
              <QuoteName $r={8}>002201 九鼎新材</QuoteName><Mark $c="#00dcff">航天</Mark>
              <QuoteName><Mark $c="#fff">FPW分时</Mark></QuoteName>
              <span>均价</span><G>13.42</G><span>涨停</span><R>15.33</R><span>跌停</span><G>12.55</G><span>笼子(<G>12.86&nbsp; 13.75</G>)</span>
            </Quote>
            <Canvas>
              <Intraday />
              <Notes $c="#ff8200">玻璃__江苏板块<br /><Mark $c="#f5f500">风电 新材料 商业航天</Mark></Notes>
            </Canvas>
          </Main>
        </Stock>
        <Axis $cols="55px 225px 229px"><span>09:30</span><span>10:30</span><span>13:00</span></Axis>
        <BoxTabs>
          {["成交量", "量比", "买卖力道", "竞价图", "成交对比", "资金驱动力", "资金博弈", "大单动向", "涨跌动因", "大单金额"].map((t, i) => (
            <BoxTab key={t} $on={i === 0}>{t}</BoxTab>
          ))}
        </BoxTabs>
        <Sheets><Sheet $on>分时图</Sheet><Sheet>分时成交</Sheet><Sheet>涨停原因</Sheet></Sheets>
      </Right>
    </Page>
  );
}
